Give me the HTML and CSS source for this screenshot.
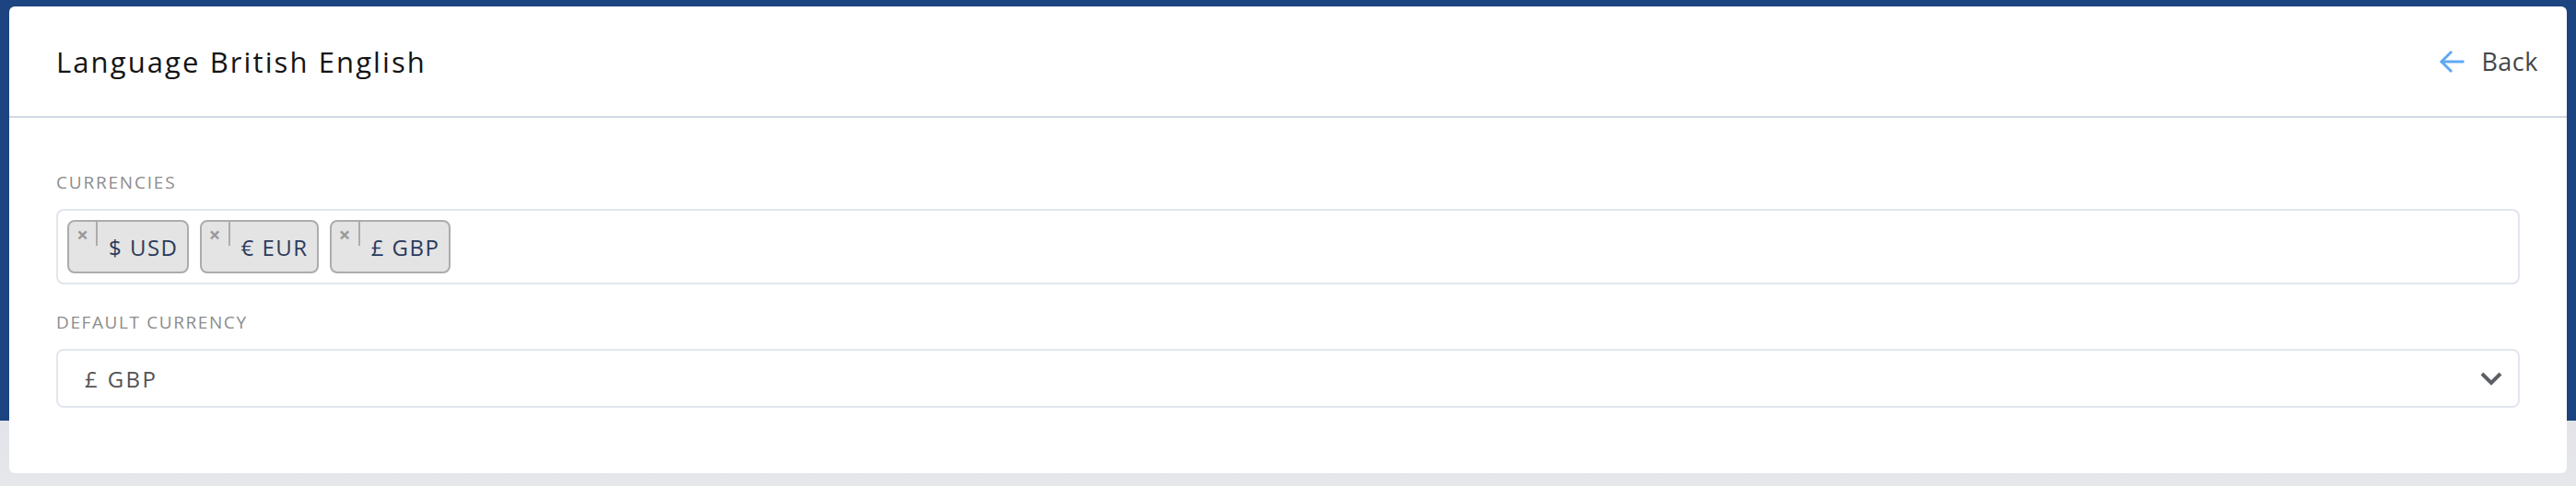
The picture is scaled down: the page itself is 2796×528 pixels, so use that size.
FILE: index.html
```html
<!DOCTYPE html>
<html lang="en">
<head>
<meta charset="utf-8">
<title>Language British English</title>
<link rel="stylesheet" href="styles.css">
</head>
<body>
<div class="card">
  <div class="card-header">
    <h1 class="title">Language British English</h1>
    <a class="back" href="#">
      <svg class="back-icon" width="28" height="28" viewBox="0 0 28 28" fill="none" stroke="#60a8f5" stroke-width="3" stroke-linecap="square">
        <path d="M26 14H4"/>
        <path d="M13 4L3 14l10 10"/>
      </svg>
      <span>Back</span>
    </a>
  </div>
  <div class="card-body">
    <div class="field">
      <div class="label">Currencies</div>
      <div class="multi">
        <span class="tag"><span class="tag-remove">×</span><span class="tag-text">$ USD</span></span>
        <span class="tag"><span class="tag-remove">×</span><span class="tag-text">€ EUR</span></span>
        <span class="tag"><span class="tag-remove">×</span><span class="tag-text">£ GBP</span></span>
      </div>
    </div>
    <div class="field field-second">
      <div class="label">Default currency</div>
      <div class="select">
        <span class="select-value">£ GBP</span>
        <svg class="chevron" width="24" height="16" viewBox="0 0 24 16" fill="none" stroke="#5c5f66" stroke-width="4">
          <path d="M2 3l10 10L22 3"/>
        </svg>
      </div>
    </div>
  </div>
</div>
</body>
</html>
```

FILE: styles.css
```css
html, body {
  margin: 0;
  padding: 0;
}
body {
  width: 2796px;
  height: 528px;
  overflow: hidden;
  background: linear-gradient(to bottom, #1c4480 0, #1c4480 457px, #e3e4e9 457px, #e6e7eb 528px);
  font-family: "Open Sans", "Noto Sans", sans-serif;
}
.card {
  margin: 7px 10px 0 10px;
  height: 507px;
  background: #ffffff;
  border-radius: 6px;
  display: flex;
  flex-direction: column;
}
.card-header {
  height: 119px;
  padding: 0 31px 0 51px;
  display: flex;
  align-items: center;
  justify-content: space-between;
  border-bottom: 2px solid #d0d8e3;
  flex: none;
}
.title {
  margin: 0;
  font-size: 31px;
  font-weight: 400;
  color: #141414;
  letter-spacing: 2.1px;
}
.back {
  display: flex;
  align-items: center;
  gap: 18px;
  font-size: 27px;
  color: #464646;
  text-decoration: none;
  letter-spacing: 0.5px;
}
.back-icon {
  display: block;
}
.card-body {
  padding: 59px 51px 0 51px;
}
.label {
  font-size: 19px;
  line-height: 22px;
  color: #8c8c8c;
  text-transform: uppercase;
  letter-spacing: 1.8px;
  margin-bottom: 18px;
}
.field-second {
  margin-top: 30px;
}
.field-second .label {
  letter-spacing: 1.6px;
}
.multi {
  height: 82px;
  box-sizing: border-box;
  border: 2px solid #e1e6ee;
  border-radius: 8px;
  padding: 10px 10px;
  display: flex;
  gap: 12px;
}
.tag {
  height: 58px;
  box-sizing: border-box;
  border: 2px solid #acacac;
  border-radius: 8px;
  background: #e4e4e4;
  display: flex;
  align-items: center;
}
.tag-remove {
  align-self: flex-start;
  width: 31px;
  height: 26px;
  box-sizing: border-box;
  border-right: 2px solid #acacac;
  color: #999999;
  font-size: 22px;
  font-weight: 700;
  line-height: 26px;
  text-align: center;
}
.tag-text {
  padding: 0 9px 0 12px;
  font-size: 24px;
  color: #2b3a5c;
  letter-spacing: 1.5px;
}
.select {
  height: 64px;
  box-sizing: border-box;
  border: 2px solid #e1e6ee;
  border-radius: 8px;
  padding: 0 17px 0 29px;
  display: flex;
  align-items: center;
  justify-content: space-between;
}
.select-value {
  font-size: 24px;
  color: #545454;
  letter-spacing: 2.4px;
}
.chevron {
  display: block;
}
```
